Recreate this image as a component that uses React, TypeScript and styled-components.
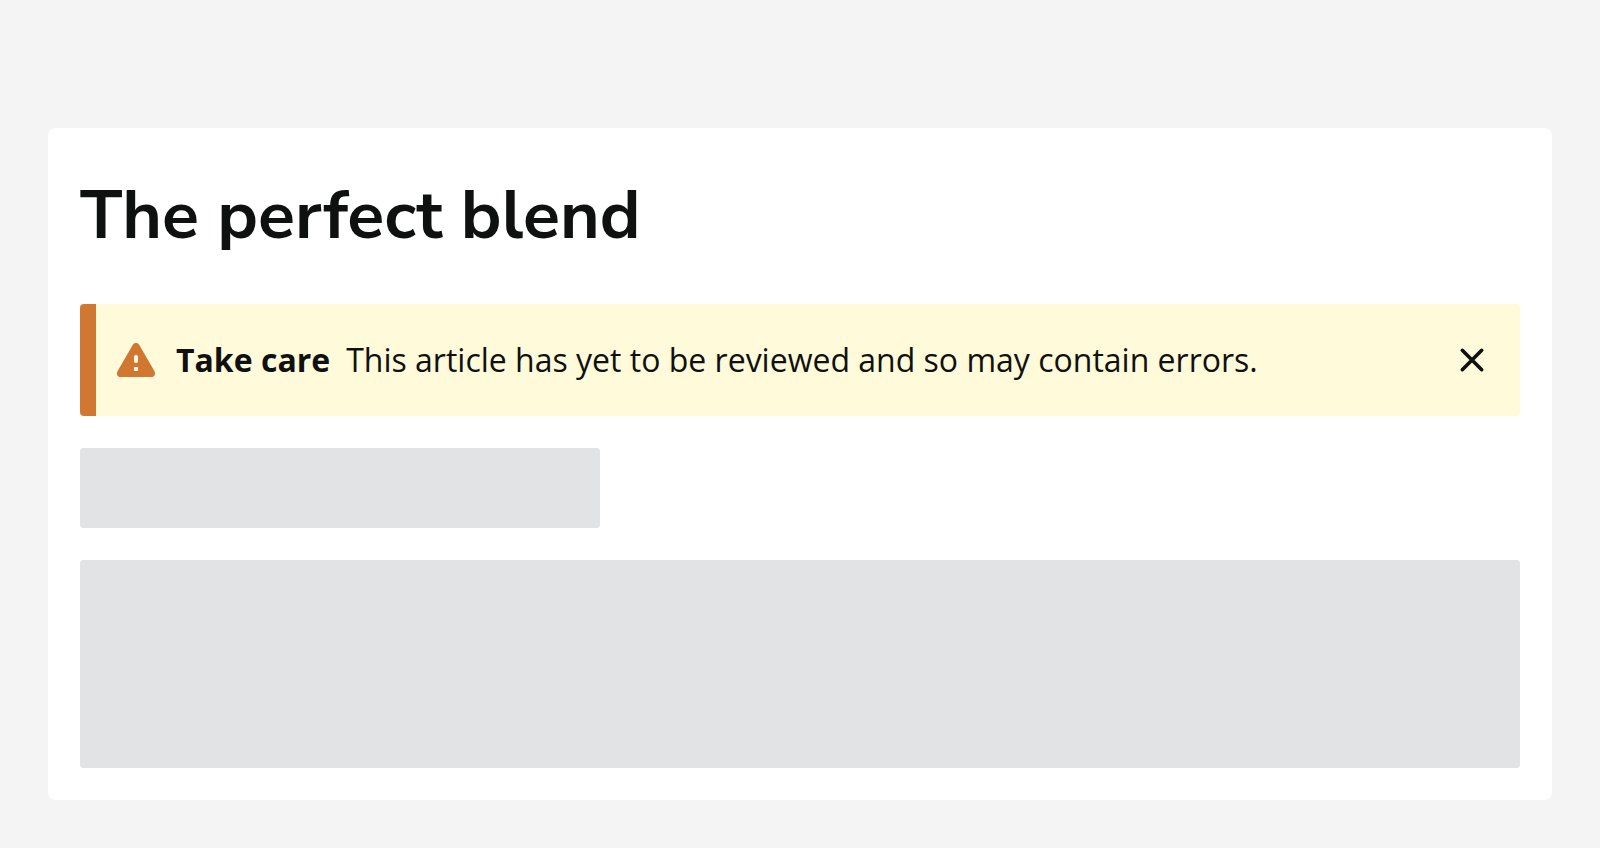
import React, { useState } from "react";
import styled, { createGlobalStyle } from "styled-components";

const GlobalStyle = createGlobalStyle`
  *, *::before, *::after { box-sizing: border-box; }
  body {
    margin: 0;
    background: #f4f4f4;
    color: #0f1110;
    font-family: "Open Sans", "Noto Sans", sans-serif;
  }
`;

const Page = styled.main`
  min-height: 100vh;
  padding: 128px 48px 48px;
`;

const Card = styled.article`
  display: flex;
  flex-direction: column;
  gap: 32px;
  padding: 32px;
  background: #ffffff;
  border-radius: 8px;
`;

const Title = styled.h1`
  margin: 0;
  font-family: "Nunito Sans", Nunito, "Open Sans", sans-serif;
  font-size: 68px;
  font-weight: 700;
  line-height: 112px;
`;

const Alert = styled.section`
  display: flex;
  align-items: center;
  gap: 20px;
  min-height: 112px;
  padding: 20px 28px 20px 20px;
  background: #fffad9;
  border-left: 16px solid #d07831;
  border-radius: 4px;
`;

const WarningIcon = styled.svg`
  flex: none;
  width: 40px;
  height: 40px;
`;

const Message = styled.p`
  display: flex;
  flex-wrap: wrap;
  flex: 1;
  column-gap: 16px;
  margin: 0;
  font-size: 32px;
  line-height: 48px;
`;

const CloseButton = styled.button`
  display: flex;
  flex: none;
  width: 40px;
  height: 40px;
  padding: 0;
  border: 0;
  background: transparent;
  color: inherit;
  cursor: pointer;
`;

const Placeholder = styled.div<{ $height: number; $width?: number }>`
  width: ${({ $width }) => ($width ? `${$width}px` : "100%")};
  max-width: 100%;
  height: ${({ $height }) => $height}px;
  background: #e2e3e5;
  border-radius: 4px;
`;

export default function App() {
  const [open, setOpen] = useState(true);

  return (
    <>
      <GlobalStyle />
      <Page>
        <Card>
          <Title>The perfect blend</Title>
          {open && (
            <Alert role="status">
              <WarningIcon viewBox="0 0 40 40" aria-hidden="true">
                <path
                  fill="#d07831"
                  d="M16.7 4.9C18.1 2.4 21.9 2.4 23.3 4.9L38.5 31.2C39.9 33.9 38.6 37 35.4 37H4.6C1.4 37 .1 33.9 1.5 31.2Z"
                />
                <rect x="18" y="15" width="4" height="8" rx="1.8" fill="#fffad9" />
                <rect x="18" y="27" width="4" height="4" rx=".3" fill="#fffad9" />
              </WarningIcon>
              <Message>
                <strong>Take care</strong>
                <span>This article has yet to be reviewed and so may contain errors.</span>
              </Message>
              <CloseButton type="button" aria-label="Dismiss" onClick={() => setOpen(false)}>
                <svg width="40" height="40" viewBox="0 0 40 40" aria-hidden="true">
                  <path
                    d="M10.3 10.3L29.7 29.7M29.7 10.3L10.3 29.7"
                    fill="none"
                    stroke="currentColor"
                    strokeWidth="3.6"
                    strokeLinecap="round"
                  />
                </svg>
              </CloseButton>
            </Alert>
          )}
          <Placeholder $height={80} $width={520} />
          <Placeholder $height={208} />
        </Card>
      </Page>
    </>
  );
}
